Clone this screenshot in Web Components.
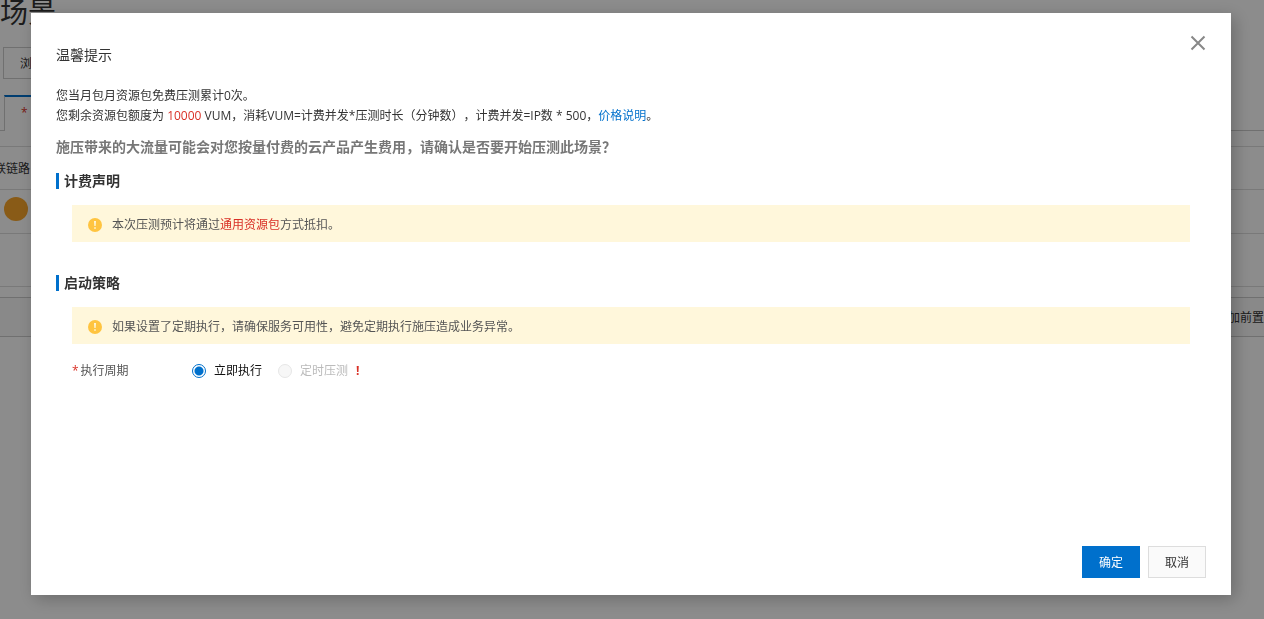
<!DOCTYPE html>
<html lang="zh-CN">
<head>
<meta charset="utf-8">
<title>温馨提示</title>
<style>
html, body { margin: 0; height: 100%; }
body {
  font: 12px/20px "Open Sans", "Noto Sans CJK SC", sans-serif;
  color: #333;
  background: #fff;
  overflow: hidden;
  text-spacing-trim: space-all;
}
b { font-weight: 400; color: #d93026; }
a { color: #0070cc; text-decoration: none; }
p { margin: 0; }
.warn { margin-top: 11px; font-size: 14px; font-weight: 700; color: #777; }
</style>
</head>
<body>
<scene-page></scene-page>
<modal-overlay>
  <confirm-dialog>
    <span slot="title">温馨提示</span>
    <p>您当月包月资源包免费压测累计0次。</p>
    <p>您剩余资源包额度为 <b>10000</b> VUM，消耗VUM=计费并发*压测时长（分钟数），计费并发=IP数 * 500，<a href="#price">价格说明</a>。</p>
    <p class="warn">施压带来的大流量可能会对您按量付费的云产品产生费用，请确认是否要开始压测此场景？</p>
    <titled-section>
      <span slot="heading">计费声明</span>
      <notice-bar>本次压测预计将通过<b>通用资源包</b>方式抵扣。</notice-bar>
    </titled-section>
    <titled-section>
      <span slot="heading">启动策略</span>
      <notice-bar>如果设置了定期执行，请确保服务可用性，避免定期执行施压造成业务异常。</notice-bar>
      <schedule-field></schedule-field>
    </titled-section>
    <action-button slot="actions" kind="primary">确定</action-button>
    <action-button slot="actions">取消</action-button>
  </confirm-dialog>
</modal-overlay>
<script>
function define(name, html, setup) {
  const template = document.createElement('template');
  template.innerHTML = html;
  customElements.define(name, class extends HTMLElement {
    constructor() {
      super();
      this.attachShadow({ mode: 'open' }).append(template.content.cloneNode(true));
    }
    connectedCallback() { if (setup) setup(this, this.shadowRoot); }
  });
}

define('scene-page', `
<style>
:host { display: block; height: 100%; overflow: hidden; }
* { box-sizing: border-box; }
h1 { margin: 0; font-size: 28px; line-height: 24px; font-weight: 400; white-space: nowrap; }
.tools { margin: 23px 0 16px 3px; }
.tools button { height: 32px; padding: 2px 16px 0; font: inherit; color: inherit; background: #fff; border: 1px solid #ccc; }
.tabs { display: flex; height: 36px; padding-left: 4px; border-bottom: 1px solid #ccc; }
.tab { height: 36px; width: 120px; padding: 6px 16px; border: 1px solid #ccc; border-top: 2px solid #0070cc; border-bottom: 0; background: #fff; color: #d93026; }
.row { display: flex; align-items: center; justify-content: space-between; border-top: 1px solid #ddd; }
.head { margin-top: 15px; height: 43px; padding-top: 2px; }
.head span { margin-left: -6px; }
.short { height: 44px; padding: 7px 4px; align-items: flex-start; }
.tall { height: 54px; border-bottom: 1px solid #ddd; }
.dot { width: 24px; height: 24px; border-radius: 50%; background: #f9a62b; }
.panel { margin-top: 10px; height: 40px; padding-top: 2px; justify-content: flex-end; background: #f9f9f9; border: 1px solid #ccc; border-width: 1px 0; }
</style>
<h1>场景</h1>
<div class="tools"><button type="button">浏览</button></div>
<div class="tabs"><div class="tab">*</div></div>
<div class="row head"><span>联链路</span></div>
<div class="row short"><i class="dot"></i></div>
<div class="row tall"></div>
<div class="row panel"><span>加前置</span></div>
`);

define('modal-overlay', `
<style>
:host { position: fixed; inset: 0; display: flex; box-sizing: border-box; padding: 13px 33px 24px 31px; background: rgba(0,0,0,.45); overflow: auto; }
::slotted(*) { flex: 1; }
</style>
<slot></slot>`);

define('confirm-dialog', `
<style>
:host { display: flex; flex-direction: column; box-sizing: border-box; padding: 22px 25px 17px; background: #fff; box-shadow: 4px 4px 16px rgba(0,0,0,.24); }
header { display: flex; justify-content: space-between; align-items: flex-start; margin-bottom: 21px; }
h2 { margin: 10px 0 0; font-size: 14px; line-height: 20px; font-weight: 400; }
.close { width: 16px; height: 16px; padding: 0; border: 0; background: none; color: #888; }
svg { display: block; }
main { flex: 1; }
footer { display: flex; justify-content: flex-end; gap: 8px; }
</style>
<header>
  <h2><slot name="title"></slot></h2>
  <button class="close" type="button" aria-label="关闭"><svg width="16" height="16" viewBox="0 0 16 16"><path d="M1.5 1.5 14.5 14.5M14.5 1.5 1.5 14.5" stroke="currentColor" stroke-width="2" fill="none"/></svg></button>
</header>
<main><slot></slot></main>
<footer><slot name="actions"></slot></footer>`, (host) => {
  host.setAttribute('role', 'dialog');
  host.setAttribute('aria-label', '温馨提示');
});

define('titled-section', `
<style>
:host { display: block; margin: 16px 0 33px; }
h3 { margin: 0 0 16px; padding-left: 5px; border-left: 3px solid #0070cc; font-size: 14px; line-height: 16px; font-weight: 700; }
.body { padding: 0 16px; }
</style>
<h3><slot name="heading"></slot></h3>
<div class="body"><slot></slot></div>`);

define('notice-bar', `
<style>
:host { display: flex; align-items: center; gap: 10px; box-sizing: border-box; min-height: 37px; padding: 9px 16px 7px; background: #fff7db; color: #555; }
svg { flex: none; }
</style>
<svg width="14" height="14" viewBox="0 0 14 14"><circle cx="7" cy="7" r="7" fill="#ffc440"/><path d="M6 3h2l-.4 5H6.4zM6.2 9.2h1.6v1.6H6.2z" fill="#fff7db"/></svg>
<span><slot></slot></span>`);

define('schedule-field', `
<style>
:host { display: block; margin-top: 17px; }
fieldset { display: flex; align-items: center; margin: 0; padding: 0; border: 0; }
.name { width: 120px; color: #555; }
.star, .mark { color: #d93026; }
.star { margin-right: 2px; }
label { display: flex; align-items: center; gap: 8px; margin-right: 16px; color: #111; }
label.off { color: #bbb; margin-right: 8px; }
input { appearance: none; box-sizing: border-box; width: 14px; height: 14px; margin: 0; border: 1px solid #e6e6e6; border-radius: 50%; background: #f7f7f7; }
input:checked { border-color: #0070cc; background: radial-gradient(circle, #0070cc 4px, #fff 5px); }
.mark { font-weight: 700; }
</style>
<fieldset aria-labelledby="n">
  <span class="name" id="n"><span class="star">*</span>执行周期</span>
  <label><input type="radio" name="when" checked>立即执行</label>
  <label class="off"><input type="radio" name="when" disabled>定时压测</label>
  <span class="mark">!</span>
</fieldset>`);

define('action-button', `
<style>
:host { display: block; }
button { box-sizing: border-box; min-width: 58px; height: 32px; padding: 2px 16px 0; border: 1px solid #ddd; background: #fafafa; color: #333; font: inherit; }
:host([kind="primary"]) button { background: #0070cc; border-color: #0070cc; color: #fff; }
</style>
<button type="button"><slot></slot></button>`);
</script>
</body>
</html>
